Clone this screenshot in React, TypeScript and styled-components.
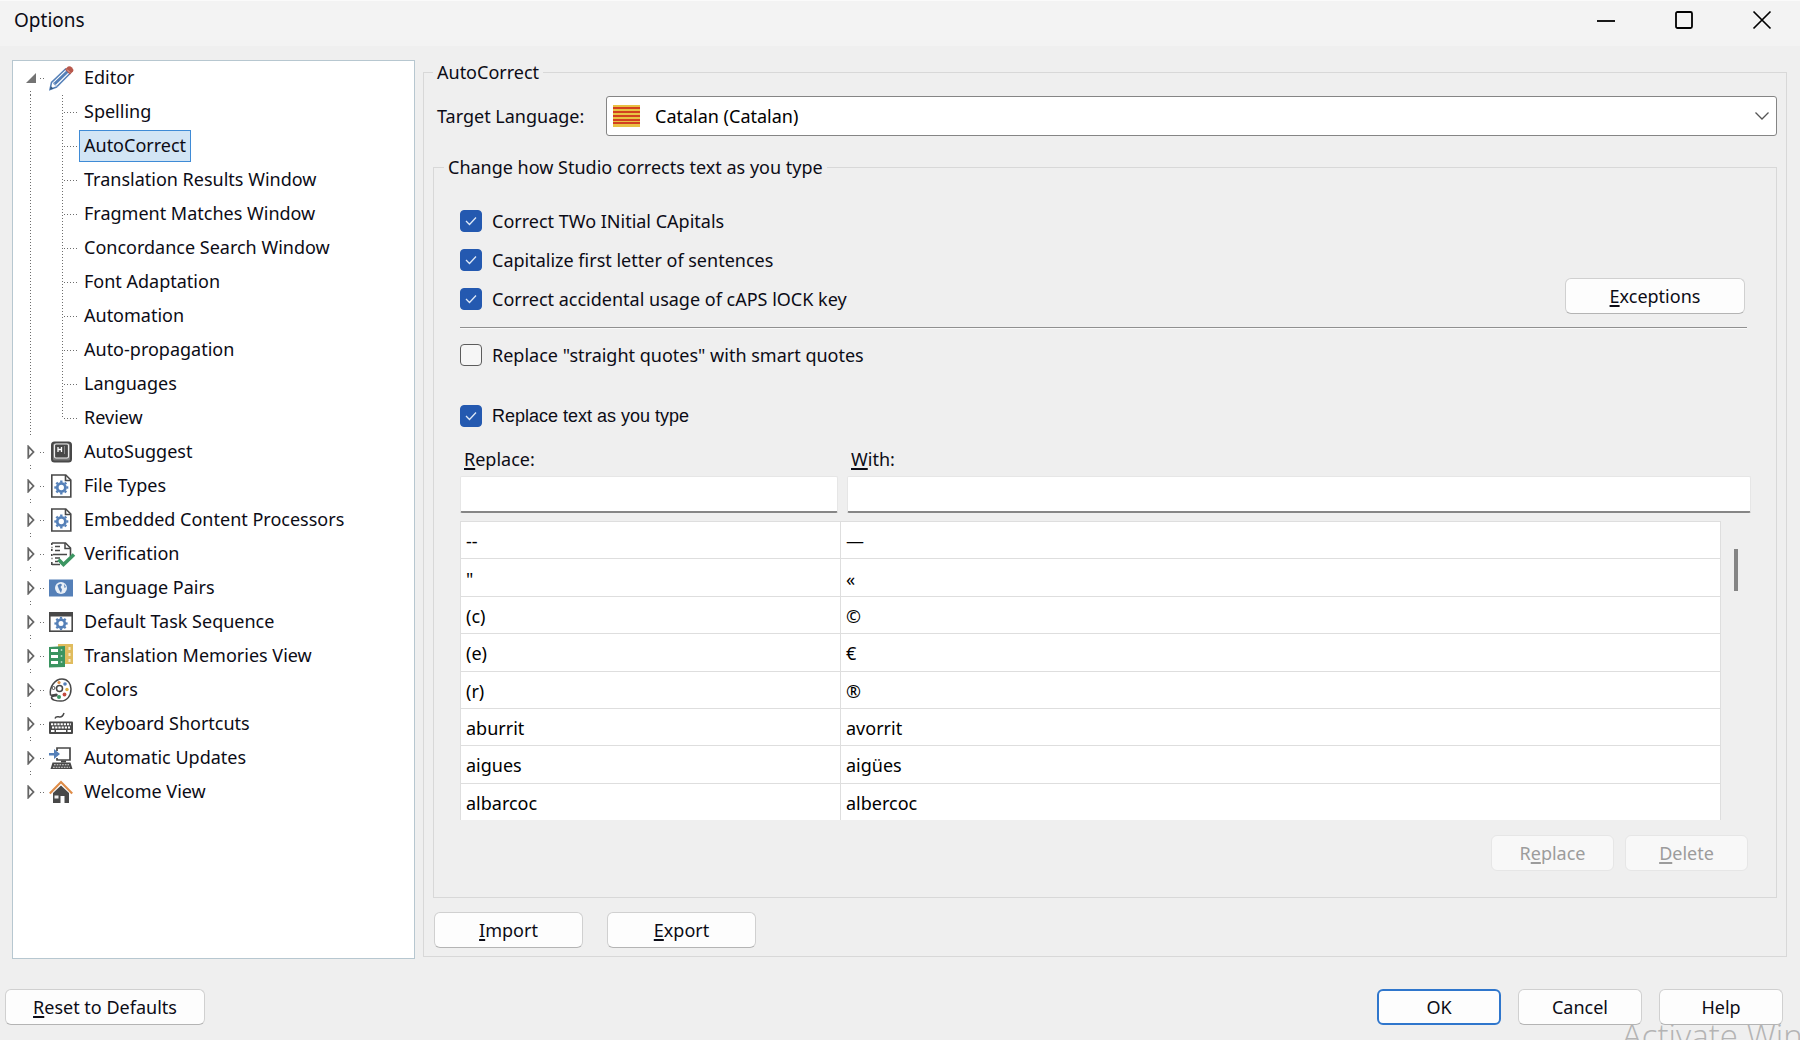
import React, { useState } from "react";
import styled, { createGlobalStyle, css } from "styled-components";

const GlobalStyle = createGlobalStyle`
  *, *::before, *::after { box-sizing: border-box; }
  body {
    margin: 0;
    background: #efefef;
    color: #0c0c16;
    font-family: "Noto Sans", "Open Sans", sans-serif;
    font-size: 18px;
    line-height: 24px;
  }
  button, input, select { font: inherit; color: inherit; }
`;

/* ---------- window frame ---------- */

const Dialog = styled.main`
  position: relative;
  display: flex;
  flex-direction: column;
  min-height: 100vh;
  overflow: hidden;
`;

const TitleBar = styled.header`
  display: flex;
  align-items: center;
  justify-content: space-between;
  height: 46px;
  padding: 0 20px 8px 14px;
  border-top: 1px solid #fafafa;
  background: #f3f3f3;
`;

const Title = styled.h1`
  margin: 0;
  font-size: 19px;
  font-weight: 400;
  line-height: 24px;
`;

const WindowButtons = styled.div`
  display: flex;
  gap: 42px;
`;

const WindowButton = styled.button`
  display: grid;
  place-items: center;
  width: 36px;
  height: 32px;
  padding: 0;
  border: 0;
  background: none;
`;

const Body = styled.div`
  flex: 1;
  display: grid;
  grid-template-columns: 403px minmax(0, 1fr);
  gap: 8px;
  padding: 14px 13px 0 12px;
`;

const Footer = styled.footer`
  display: flex;
  gap: 17px;
  padding: 30px 17px 15px 5px;
`;

const Spacer = styled.span`
  flex: 1;
`;

const Watermark = styled.div`
  position: absolute;
  right: 0;
  bottom: 0;
  width: 178px;
  height: 24px;
  overflow: hidden;
  color: #b4b4b4;
  font-family: "Open Sans", "Noto Sans", sans-serif;
  font-size: 33px;
  font-weight: 300;
  line-height: 40px;
  white-space: nowrap;
  pointer-events: none;
`;

/* ---------- controls ---------- */

const Button = styled.button<{ $width: number; $primary?: boolean }>`
  width: ${(p) => p.$width}px;
  height: 36px;
  padding: 0;
  border: 1px solid #d0d0d0;
  border-bottom-color: #b4b4b4;
  border-radius: 6px;
  background: #fdfdfd;
  ${(p) => p.$primary && css`border: 2px solid #2f76cc;`}
  &:disabled {
    border-color: #e6e6e6;
    background: #f8f8f8;
    color: #9c9c9c;
  }
`;

const Key = styled.span`
  text-decoration: underline;
  text-decoration-thickness: 2px;
  text-underline-offset: 2px;
`;

const Group = styled.fieldset<{ $pad: string }>`
  min-width: 0;
  margin: 0;
  padding: ${(p) => p.$pad};
  border: 1px solid #d8d8d8;
`;

const Legend = styled.legend`
  padding: 0 4px;
  line-height: 24px;
`;

const LanguageRow = styled.div`
  display: grid;
  grid-template-columns: 173px minmax(0, 1fr);
  align-items: center;
  margin-bottom: 19px;
`;

const LanguageLabel = styled.label`
  padding-left: 4px;
`;

const SelectBox = styled.div`
  display: grid;
  align-items: center;
  > * { grid-area: 1 / 1; }
  > svg { pointer-events: none; }
  > svg:first-of-type { margin-left: 7px; }
  > svg:last-of-type { justify-self: end; margin-right: 8px; }
`;

const Select = styled.select`
  appearance: none;
  width: 100%;
  height: 40px;
  padding: 0 48px;
  border: 1px solid #858585;
  border-radius: 3px;
  background: #fff;
  color: #000;
`;

const GroupBody = styled.div`
  padding: 22px 15px 0 16px;
`;

const CheckSection = styled.div`
  display: flex;
  align-items: flex-end;
  justify-content: space-between;
  padding-right: 6px;
  > button { margin-bottom: 4px; }
`;

const CheckLabel = styled.label<{ $plain?: boolean }>`
  display: flex;
  align-items: center;
  gap: 10px;
  height: 39px;
  ${(p) => p.$plain && css`font-family: "Liberation Sans", Arial, sans-serif;`}
`;

const CheckMark = styled.span`
  display: grid;
  place-items: center;
  > * { grid-area: 1 / 1; }
  > svg { pointer-events: none; }
`;

const CheckInput = styled.input`
  appearance: none;
  width: 22px;
  height: 22px;
  margin: 0;
  border: 1px solid #5c5c5c;
  border-radius: 4px;
  background: #f6f6f6;
  &:checked {
    border-color: #2459b0;
    background: #2459b0;
  }
`;

const Divider = styled.hr`
  margin: 9px 4px 6px 0;
  border: 0;
  border-top: 1px solid #909090;
  border-bottom: 1px solid #fafafa;
`;

const SmartQuotes = styled.div`
  margin-bottom: 22px;
`;

const Fields = styled.div`
  display: grid;
  grid-template-columns: 378px minmax(0, 1fr);
  column-gap: 9px;
  row-gap: 5px;
  margin: 12px 0 8px;
`;

const FieldLabel = styled.label`
  padding-left: 4px;
`;

const TextInput = styled.input`
  width: 100%;
  height: 37px;
  padding: 0 6px;
  border: 1px solid #e6e6e6;
  border-bottom: 2px solid #868686;
  border-radius: 2px;
  background: #fff;
`;

const ListArea = styled.div`
  display: flex;
  height: 299px;
  overflow: hidden;
`;

const Table = styled.table`
  flex: 1;
  height: 300px;
  border-collapse: collapse;
  table-layout: fixed;
  background: #fff;
  color: #000;
`;

const Cell = styled.td`
  padding: 2px 5px 0;
  border: 1px solid #dedede;
  &:first-child { width: 380px; }
`;

const Scroll = styled.div`
  width: 30px;
  padding: 28px 13px;
`;

const Thumb = styled.div`
  width: 4px;
  height: 42px;
  background: #858585;
`;

const ListActions = styled.div`
  display: flex;
  justify-content: flex-end;
  gap: 11px;
  padding: 15px 3px 26px 0;
`;

const FileActions = styled.div`
  display: flex;
  gap: 24px;
  padding: 14px 1px 0;
`;

/* ---------- tree ---------- */

const TreePanel = styled.nav`
  border: 1px solid #b7c7d0;
  background: #fff;
`;

const TreeList = styled.ul`
  margin: 0;
  padding: 0;
  list-style: none;
`;

const dotsDown = "repeating-linear-gradient(to bottom, #6e6e6e 0 1px, transparent 1px 3px)";
const dotsAcross = "repeating-linear-gradient(to right, #6e6e6e 0 1px, transparent 1px 3px)";

const ChildList = styled(TreeList)`
  background:
    ${dotsDown} 17px 0 / 1px 100% no-repeat,
    ${dotsDown} 49px 0 / 1px calc(100% - 17px) no-repeat;
`;

const ParentRow = styled.div<{ $last: boolean }>`
  display: flex;
  align-items: center;
  height: 34px;
  padding-left: 12px;
  ${(p) => !p.$last && css`background: ${dotsDown} 17px 100% / 1px 4px no-repeat;`}
`;

const ChildRow = styled.div`
  display: flex;
  align-items: center;
  height: 34px;
  padding-left: 51px;
`;

const Expander = styled.button`
  display: grid;
  place-items: center;
  width: 12px;
  height: 16px;
  margin-right: 3px;
  padding: 0;
  border: 0;
  background: none;
`;

const Connector = styled.span<{ $width: number }>`
  width: ${(p) => p.$width}px;
  height: 1px;
  background: ${dotsAcross};
`;

const IconSlot = styled.span`
  display: grid;
  width: 24px;
  height: 24px;
  margin: 0 6px 0 5px;
`;

const Item = styled.a<{ $selected?: boolean }>`
  height: 32px;
  padding: 0 4px;
  border: 1px solid ${(p) => (p.$selected ? "#3f8bd6" : "transparent")};
  background: ${(p) => (p.$selected ? "#d2e5f5" : "transparent")};
  color: #0c0c16;
  line-height: 28px;
  text-decoration: none;
  white-space: nowrap;
`;

/* ---------- icons ---------- */

const ink = "#484848";
const blue = "#5580b8";

const Gear = ({ x, y, r }: { x: number; y: number; r: number }) => (
  <g stroke={blue} fill="none">
    <circle cx={x} cy={y} r={r * 0.58} strokeWidth={r * 0.4} />
    {[0, 45, 90, 135, 180, 225, 270, 315].map((a) => (
      <path key={a} d={`M${x} ${y - r * 0.72}V${y - r}`} strokeWidth={r * 0.34} transform={`rotate(${a} ${x} ${y})`} />
    ))}
  </g>
);

const Pencil = () => (
  <>
    <path d="M1 23.500l1.500-7L16.500 3l4.500 4.500L7.500 21z" fill="#fff" stroke={blue} strokeWidth="1.500" />
    <path d="M5 18.500L18.500 5.500" stroke={blue} strokeWidth="3" />
    <path d="M3.500 16l4.500 4.500" stroke="#a9bfdc" strokeWidth="1" />
    <path d="M16 3.500l3-3q2-1 4 1t1 4l-3 3z" fill="#b8584c" />
    <path d="M18 3.500l3 3" stroke="#e3aaa2" strokeWidth="1" />
    <path d="M1 23.500l.8-3.500 2.700 2.700z" fill="#35587f" />
  </>
);

const KeyCap = () => (
  <>
    <rect x="3" y="2.500" width="19" height="19" rx="2.500" fill="#777" stroke={ink} strokeWidth="2" />
    <rect x="5.500" y="4" width="14" height="14" rx="1.500" fill={ink} stroke="#eee" strokeWidth="1.200" />
    <path d="M9 7v5M12.500 7v5M9 9.500h3.500" stroke="#fff" strokeWidth="1.300" />
    <path d="M15.500 6v8" stroke="#888" strokeWidth="1" />
  </>
);

const Sheet = () => (
  <>
    <path d="M2.800 1h14l5 5v17h-19z" fill="#fff" stroke={ink} strokeWidth="1.600" />
    <path d="M16.500 1v5.500H22" fill="none" stroke={ink} strokeWidth="1.600" />
  </>
);

const FileGear = () => (
  <>
    <Sheet />
    <Gear x={12.3} y={13.5} r={7} />
  </>
);

const Verify = () => (
  <>
    <path d="M11 22.500H3M2.800 20v3M2.800 1h13.700l5 5v8M2.800 1v2M2.800 7v2M2.800 12v2" fill="none" stroke={ink} strokeWidth="1.600" />
    <path d="M16 1v5.500h5.500M6 4.500h5M6 8.500h5M4 12.500h14M6 16h5M6 19.500h3M2.500 5.500h1M2.500 16.500h1" fill="none" stroke={ink} strokeWidth="1.500" />
    <path d="M9.500 17.500l5 5L25 12.500" fill="none" stroke="#3c9662" strokeWidth="3.600" />
  </>
);

const Globe = () => (
  <>
    <rect x="0" y="3.500" width="24" height="17" fill={blue} />
    <circle cx="12" cy="12" r="6" fill="#e9eff7" />
    <path d="M8.500 9.500q3-3 4.500-.5l-1.500 2 1.500 2.500-1 3.500-2-3.500zM15 8l2 3-1.500 1z" fill={blue} />
  </>
);

const WindowGear = () => (
  <>
    <rect x=".8" y="2.800" width="22.400" height="18.400" fill="#fff" stroke={ink} strokeWidth="1.600" />
    <path d="M0 2h24v4.500H0z" fill={ink} />
    <Gear x={12} y={13.5} r={6.6} />
  </>
);

const Memories = () => (
  <>
    <path d="M9 0h15v20H9z" fill="#e0bc5e" />
    <path d="M20.500 3v3M20.500 9v3M20.500 15v3" stroke="#f7ecc9" strokeWidth="2" />
    <path d="M0 3l16-1v21l-16 .5z" fill="#3a9460" />
    <path d="M2 6.500h7M2 12.500h7M2 18.500h7" stroke="#fff" strokeWidth="3" />
    <path d="M12.500 5v2M12.500 11v2M12.500 17v2" stroke="#a6d3b8" strokeWidth="1.500" />
  </>
);

const Palette = () => (
  <>
    <path d="M1.500 17C0 9 6 1 13 1c6 0 9 5 9 10 0 7-4 12-10 12-5 0-10-1-9.500-4 .5-2 5 0 5.500-2s-5 1-6.500 0z" fill="#fff" stroke={ink} strokeWidth="1.500" />
    <circle cx="10.500" cy="10.500" r="3" fill="#fff" stroke={ink} strokeWidth="1.500" />
    <circle cx="4.500" cy="10" r="1.500" fill="none" stroke={ink} />
    <circle cx="10" cy="4.500" r="1.600" fill="#dd8a43" />
    <circle cx="16" cy="6" r="1.800" fill={blue} />
    <circle cx="18" cy="11.500" r="1.700" fill="#e0b040" />
    <circle cx="15.500" cy="16.500" r="1.900" fill="#c34a3e" />
    <circle cx="10" cy="19" r="2" fill="#3c9662" />
  </>
);

const Keyboard = () => (
  <>
    <path d="M6 6.500c1-3 3-1.500 5-1.500s3-1 4-4" fill="none" stroke={ink} strokeWidth="1.500" />
    <rect x="0" y="9.500" width="24" height="12.500" rx="1" fill={ink} />
    <path d="M2 12.300h20M3 15.500h18" stroke="#fff" strokeWidth="2" strokeDasharray="2.200 1" />
    <path d="M2 19h3.500M7 19h10M18.500 19H22" stroke="#fff" strokeWidth="2" />
  </>
);

const Update = () => (
  <>
    <path d="M8 5V2h13v12H8v-2" fill="#fff" stroke={ink} strokeWidth="1.700" />
    <path d="M0 7h5V3l6 5-6 5V9.500H0z" fill={blue} />
    <path d="M12 14.500h5v2h-5z" fill={ink} />
    <path d="M3.500 16.500h18l2 6.500h-22z" fill={ink} />
    <path d="M5 18.700h15M4 21.200h17" stroke="#ddd" strokeWidth="1.100" strokeDasharray="1.700 1" />
  </>
);

const House = () => (
  <>
    <path d="M4 13l8-7.500 8 7.500v10h-4.500v-7h-4v7H4z" fill={ink} />
    <path d="M5.500 15.500h4v3h-4z" fill="#eee" />
    <path d="M.8 13.500L12 2l11.200 11.500" fill="none" stroke="#df8d49" strokeWidth="2.200" />
  </>
);

const Glyph = ({ size = 24, children }: { size?: number; children: React.ReactNode }) => (
  <svg width={size} height={size} viewBox={`0 0 ${size} ${size}`} fill="none" overflow="visible" aria-hidden="true">
    {children}
  </svg>
);

const Flag = () => (
  <svg width="27" height="22" viewBox="0 0 27 22" aria-hidden="true">
    <rect width="27" height="22" fill="#e9c143" />
    {[2, 6, 10, 14, 17].map((y) => (
      <rect key={y} y={y} width="27" height="2" fill="#d2401f" />
    ))}
  </svg>
);

/* ---------- data ---------- */

type Node = { name: string; icon: () => React.JSX.Element; children?: string[] };

const tree: Node[] = [
  {
    name: "Editor",
    icon: Pencil,
    children: [
      "Spelling",
      "AutoCorrect",
      "Translation Results Window",
      "Fragment Matches Window",
      "Concordance Search Window",
      "Font Adaptation",
      "Automation",
      "Auto-propagation",
      "Languages",
      "Review",
    ],
  },
  { name: "AutoSuggest", icon: KeyCap },
  { name: "File Types", icon: FileGear },
  { name: "Embedded Content Processors", icon: FileGear },
  { name: "Verification", icon: Verify },
  { name: "Language Pairs", icon: Globe },
  { name: "Default Task Sequence", icon: WindowGear },
  { name: "Translation Memories View", icon: Memories },
  { name: "Colors", icon: Palette },
  { name: "Keyboard Shortcuts", icon: Keyboard },
  { name: "Automatic Updates", icon: Update },
  { name: "Welcome View", icon: House },
];

const corrections = [
  ["--", "—"],
  ['"', "«"],
  ["(c)", "©"],
  ["(e)", "€"],
  ["(r)", "®"],
  ["aburrit", "avorrit"],
  ["aigues", "aigües"],
  ["albarcoc", "albercoc"],
];

/* ---------- parts ---------- */

const Access = ({ text, at = 0 }: { text: string; at?: number }) => (
  <>
    {text.slice(0, at)}
    <Key>{text[at]}</Key>
    {text.slice(at + 1)}
  </>
);

const Check = ({ text, initial = true, plain }: { text: string; initial?: boolean; plain?: boolean }) => {
  const [on, setOn] = useState(initial);
  return (
    <CheckLabel $plain={plain}>
      <CheckMark>
        <CheckInput type="checkbox" checked={on} onChange={() => setOn(!on)} />
        {on && (
          <svg width="12" height="10" viewBox="0 0 12 10" fill="none" aria-hidden="true">
            <path d="M1 5l3.500 3.500L11 1.500" stroke="#dfe9f7" strokeWidth="1.300" />
          </svg>
        )}
      </CheckMark>
      {text}
    </CheckLabel>
  );
};

const Tree = () => {
  const [selected, setSelected] = useState("AutoCorrect");
  return (
    <TreePanel aria-label="Option pages">
      <TreeList>
        {tree.map(({ name, icon: Icon, children }, i) => (
          <li key={name}>
            <ParentRow $last={i === tree.length - 1}>
              <Expander aria-label={`Toggle ${name}`} aria-expanded={!!children}>
                {children ? (
                  <svg width="10" height="10" viewBox="0 0 10 10"><path d="M10 0v10H0z" fill="#737373" /></svg>
                ) : (
                  <svg width="8" height="14" viewBox="0 0 8 14"><path d="M1.300 1.500v11L6.500 7z" fill="#fff" stroke="#666" strokeWidth="1.800" /></svg>
                )}
              </Expander>
              <Connector $width={4} />
              <IconSlot><Glyph><Icon /></Glyph></IconSlot>
              <Item href="#" $selected={selected === name} onClick={() => setSelected(name)}>{name}</Item>
            </ParentRow>
            {children && (
              <ChildList>
                {children.map((child) => (
                  <li key={child}>
                    <ChildRow>
                      <Connector $width={15} />
                      <Item href="#" $selected={selected === child} onClick={() => setSelected(child)}>{child}</Item>
                    </ChildRow>
                  </li>
                ))}
              </ChildList>
            )}
          </li>
        ))}
      </TreeList>
    </TreePanel>
  );
};

export default function App() {
  return (
    <>
      <GlobalStyle />
      <Dialog>
        <TitleBar>
          <Title>Options</Title>
          <WindowButtons>
            <WindowButton aria-label="Minimize">
              <Glyph size={18}><path d="M0 10h18" stroke="#000" strokeWidth="1.800" /></Glyph>
            </WindowButton>
            <WindowButton aria-label="Maximize">
              <Glyph size={18}><rect x="1" y="1" width="16" height="16" rx="1.500" stroke="#000" strokeWidth="1.800" /></Glyph>
            </WindowButton>
            <WindowButton aria-label="Close">
              <Glyph size={18}><path d="M.5.500l17 17M17.500.500l-17 17" stroke="#000" strokeWidth="1.700" /></Glyph>
            </WindowButton>
          </WindowButtons>
        </TitleBar>

        <Body>
          <Tree />
          <div>
            <Group $pad="12px 9px 8px">
              <Legend>AutoCorrect</Legend>
              <LanguageRow>
                <LanguageLabel htmlFor="language">Target Language:</LanguageLabel>
                <SelectBox>
                  <Select id="language">
                    <option>Catalan (Catalan)</option>
                  </Select>
                  <Flag />
                  <svg width="14" height="8" viewBox="0 0 14 8" fill="none" aria-hidden="true">
                    <path d="M.5.500L7 7l6.500-6.500" stroke="#555" strokeWidth="1.300" />
                  </svg>
                </SelectBox>
              </LanguageRow>

              <Group $pad="0 10px">
                <Legend>Change how Studio corrects text as you type</Legend>
                <GroupBody>
                  <CheckSection>
                    <div>
                      <Check text="Correct TWo INitial CApitals" />
                      <Check text="Capitalize first letter of sentences" />
                      <Check text="Correct accidental usage of cAPS lOCK key" />
                    </div>
                    <Button $width={180}><Access text="Exceptions" /></Button>
                  </CheckSection>
                  <Divider />
                  <SmartQuotes>
                    <Check text={'Replace "straight quotes" with smart quotes'} initial={false} />
                  </SmartQuotes>
                  <Check text="Replace text as you type" plain />

                  <Fields>
                    <FieldLabel htmlFor="replace"><Access text="Replace:" /></FieldLabel>
                    <FieldLabel htmlFor="with"><Access text="With:" /></FieldLabel>
                    <TextInput id="replace" />
                    <TextInput id="with" />
                  </Fields>

                  <ListArea>
                    <Table>
                      <tbody>
                        {corrections.map(([from, to]) => (
                          <tr key={from}>
                            <Cell>{from}</Cell>
                            <Cell>{to}</Cell>
                          </tr>
                        ))}
                      </tbody>
                    </Table>
                    <Scroll><Thumb /></Scroll>
                  </ListArea>

                  <ListActions>
                    <Button $width={123} disabled><Access text="Replace" at={1} /></Button>
                    <Button $width={123} disabled><Access text="Delete" /></Button>
                  </ListActions>
                </GroupBody>
              </Group>

              <FileActions>
                <Button $width={149}><Access text="Import" /></Button>
                <Button $width={149}><Access text="Export" /></Button>
              </FileActions>
            </Group>
          </div>
        </Body>

        <Footer>
          <Button $width={200}><Access text="Reset to Defaults" /></Button>
          <Spacer />
          <Button $width={124} $primary>OK</Button>
          <Button $width={124}>Cancel</Button>
          <Button $width={124}>Help</Button>
        </Footer>
        <Watermark>Activate Windows</Watermark>
      </Dialog>
    </>
  );
}
